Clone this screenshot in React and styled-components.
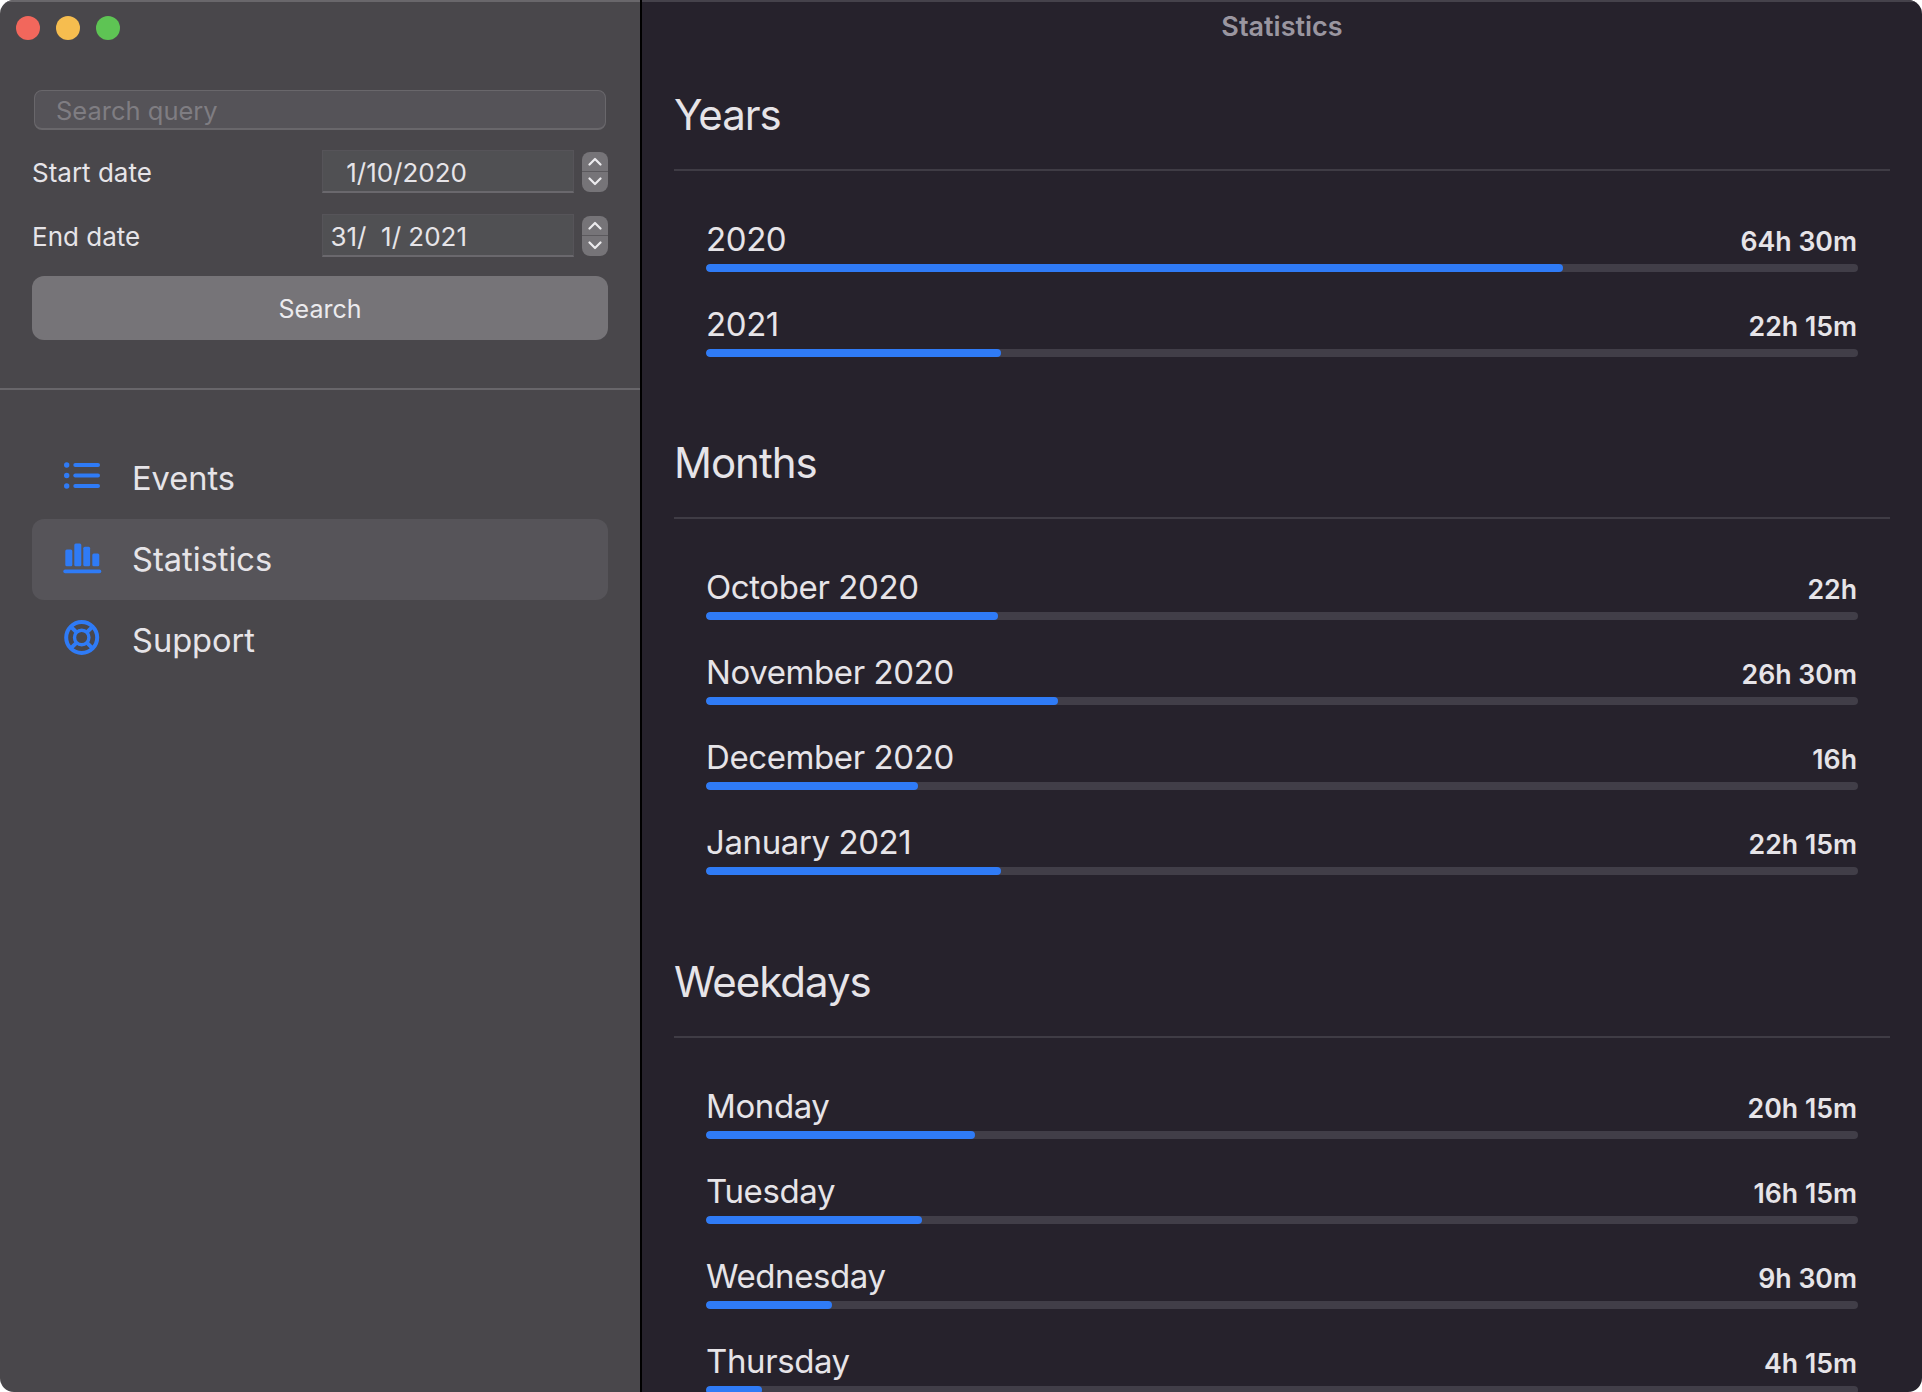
import React from "react";
import styled, { createGlobalStyle } from "styled-components";

const GlobalStyle = createGlobalStyle`
  html, body {
    margin: 0;
    padding: 0;
    background: #fff;
  }
  * {
    box-sizing: border-box;
  }
`;

const Window = styled.div`
  display: flex;
  width: 1922px;
  height: 1392px;
  overflow: hidden;
  border-radius: 14px;
  font-family: Inter, "Liberation Sans", sans-serif;
  color: #e6e4e8;
`;

const Sidebar = styled.aside`
  flex: 0 0 640px;
  display: flex;
  flex-direction: column;
  background: #49474b;
  border-top: 2px solid #69676b;
`;

const Lights = styled.div`
  display: flex;
  gap: 16px;
  padding: 14px 16px 0;
`;

const Light = styled.span`
  width: 24px;
  height: 24px;
  border-radius: 50%;
  background: ${(p) => p.$color};
`;

const Form = styled.div`
  display: flex;
  flex-direction: column;
  padding: 50px 32px 48px;
  border-bottom: 2px solid #68666a;
`;

const SearchInput = styled.input`
  width: 572px;
  height: 40px;
  margin-left: 2px;
  padding: 2px 20px 0 21px;
  border: 1px solid #69676b;
  border-bottom-width: 2px;
  border-radius: 8px;
  background: #555358;
  color: #e6e4e8;
  font: 400 25.5px Inter, "Liberation Sans", sans-serif;
  outline: none;
  &::placeholder {
    color: #7f7d82;
    opacity: 1;
  }
`;

const DateRow = styled.div`
  display: flex;
  align-items: center;
  height: 43px;
  margin-top: ${(p) => p.$top}px;
`;

const DateLabel = styled.label`
  flex: 0 0 290px;
  padding-top: 2px;
  font-size: 26px;
`;

const DateField = styled.div`
  width: 252px;
  height: 43px;
  padding-right: 106px;
  border: 1px solid #565459;
  border-bottom: 2px solid #6a686d;
  background: #505053;
  font-size: 26px;
  line-height: 44px;
  text-align: right;
  white-space: pre;
`;

const Stepper = styled.div`
  width: 26px;
  height: 40px;
  margin-left: 8px;
  display: flex;
  flex-direction: column;
  border-radius: 8px;
  background: #767478;
  overflow: hidden;
`;

const StepHalf = styled.div`
  flex: 1;
  display: flex;
  align-items: center;
  justify-content: center;
  & + & {
    border-top: 1px solid #5b595d;
  }
`;

const SearchButton = styled.button`
  height: 64px;
  margin-top: 19px;
  padding-top: 2px;
  border: 0;
  border-radius: 12px;
  background: #767478;
  color: #ecebee;
  font: 400 25px Inter, "Liberation Sans", sans-serif;
`;

const Nav = styled.nav`
  display: flex;
  flex-direction: column;
  padding: 48px 32px 0;
`;

const NavItem = styled.div`
  display: flex;
  align-items: center;
  height: 81px;
  padding: 0 0 2px 32px;
  gap: 32px;
  border-radius: 12px;
  background: ${(p) => (p.$active ? "#565459" : "transparent")};
  font-size: 32.6px;
`;

const NavIcon = styled.svg`
  flex: 0 0 36px;
  width: 36px;
  height: 36px;
  overflow: visible;
  fill: #2f7bf6;
  stroke: #2f7bf6;
`;

const SupportGlyph = styled(NavIcon)`
  fill: none;
`;

const Gutter = styled.div`
  flex: 0 0 2px;
  background: #000;
`;

const Main = styled.main`
  flex: 1;
  min-width: 0;
  background: #26222c;
  border-top: 2px solid #45424b;
`;

const TitleBar = styled.header`
  height: 52px;
  font-size: 27px;
  font-weight: 600;
  line-height: 50px;
  text-align: center;
  color: #9a96a0;
`;

const Section = styled.section`
  margin: 37px 32px 82px;
  & + & {
    margin-bottom: 83px;
  }
`;

const SectionTitle = styled.h2`
  margin: 0;
  height: 80px;
  padding-bottom: 31px;
  font-size: 42px;
  font-weight: 400;
  letter-spacing: -1px;
  line-height: 48px;
  border-bottom: 2px solid #3f3c45;
`;

const Rows = styled.div`
  margin-top: 16px;
  padding: 0 32px;
`;

const Row = styled.div`
  height: 85px;
  display: flex;
  flex-direction: column;
  justify-content: flex-end;
`;

const RowText = styled.div`
  display: flex;
  align-items: baseline;
  justify-content: space-between;
  padding-right: 1px;
  margin-bottom: 5px;
`;

const RowLabel = styled.span`
  font-size: 33px;
  letter-spacing: -0.4px;
  line-height: 40px;
`;

const RowValue = styled.span`
  font-size: 26.7px;
  font-weight: 600;
`;

const Track = styled.div`
  height: 8px;
  border-radius: 4px;
  background: #413e48;
  overflow: hidden;
`;

const Fill = styled.div`
  height: 100%;
  border-radius: 4px;
  background: #2f7bf6;
`;

const TOTAL_MINUTES = 5205;

const SECTIONS = [
  {
    title: "Years",
    rows: [
      ["2020", 3870],
      ["2021", 1335],
    ],
  },
  {
    title: "Months",
    rows: [
      ["October 2020", 1320],
      ["November 2020", 1590],
      ["December 2020", 960],
      ["January 2021", 1335],
    ],
  },
  {
    title: "Weekdays",
    rows: [
      ["Monday", 1215],
      ["Tuesday", 975],
      ["Wednesday", 570],
      ["Thursday", 255],
    ],
  },
];

function formatMinutes(total) {
  const h = Math.floor(total / 60);
  const m = total % 60;
  return m ? `${h}h ${m}m` : `${h}h`;
}

function Chevron({ up }) {
  return (
    <svg width="14" height="9" viewBox="0 0 14 9" fill="none" stroke="#ecebee" strokeWidth="2.2" strokeLinecap="round" strokeLinejoin="round">
      <path d={up ? "M1.5 7.5L7 2L12.5 7.5" : "M1.5 1.5L7 7L12.5 1.5"} />
    </svg>
  );
}

function DateInput({ label, value, top }) {
  return (
    <DateRow $top={top}>
      <DateLabel>{label}</DateLabel>
      <DateField>{value}</DateField>
      <Stepper>
        <StepHalf>
          <Chevron up />
        </StepHalf>
        <StepHalf>
          <Chevron />
        </StepHalf>
      </Stepper>
    </DateRow>
  );
}

function EventsIcon() {
  return (
    <NavIcon viewBox="0 0 36 36" strokeWidth="0">
      <circle cx="2.7" cy="5" r="2.7" />
      <circle cx="2.7" cy="15.5" r="2.7" />
      <circle cx="2.7" cy="26" r="2.7" />
      <rect x="9.3" y="3" width="26.7" height="4" rx="2" />
      <rect x="9.3" y="13.5" width="26.7" height="4" rx="2" />
      <rect x="9.3" y="24" width="26.7" height="4" rx="2" />
    </NavIcon>
  );
}

function StatisticsIcon() {
  return (
    <NavIcon viewBox="0 0 36 36" strokeWidth="0">
      <rect x="1.3" y="8.5" width="7" height="16.7" rx="1.5" />
      <rect x="10.3" y="2.5" width="7" height="22.7" rx="1.5" />
      <rect x="19.3" y="5.8" width="6.8" height="19.4" rx="1.5" />
      <rect x="28.3" y="12.5" width="7" height="12.7" rx="1.5" />
      <rect x="-0.7" y="28.5" width="38" height="3.7" rx="1.8" />
    </NavIcon>
  );
}

function SupportIcon() {
  return (
    <SupportGlyph viewBox="0 0 36 36">
      <circle cx="17.7" cy="15.5" r="15.5" strokeWidth="4" />
      <circle cx="17.7" cy="15.5" r="7.2" strokeWidth="3.4" />
      <path d="M6.8 4.6L12.6 10.4M28.6 4.6L22.8 10.4M6.8 26.4L12.6 20.6M28.6 26.4L22.8 20.6" strokeWidth="4" />
    </SupportGlyph>
  );
}

export default function App() {
  return (
    <>
      <GlobalStyle />
      <Window>
        <Sidebar>
          <Lights>
            <Light $color="#f2675c" />
            <Light $color="#f6bd4f" />
            <Light $color="#5ec454" />
          </Lights>
          <Form>
            <SearchInput placeholder="Search query" />
            <DateInput label="Start date" value="1/10/2020" top={20} />
            <DateInput label="End date" value="31/  1/ 2021" top={21} />
            <SearchButton>Search</SearchButton>
          </Form>
          <Nav>
            <NavItem>
              <EventsIcon />
              Events
            </NavItem>
            <NavItem $active>
              <StatisticsIcon />
              Statistics
            </NavItem>
            <NavItem>
              <SupportIcon />
              Support
            </NavItem>
          </Nav>
        </Sidebar>
        <Gutter />
        <Main>
          <TitleBar>Statistics</TitleBar>
          {SECTIONS.map((section) => (
            <Section key={section.title}>
              <SectionTitle>{section.title}</SectionTitle>
              <Rows>
                {section.rows.map(([label, minutes]) => (
                  <Row key={label}>
                    <RowText>
                      <RowLabel>{label}</RowLabel>
                      <RowValue>{formatMinutes(minutes)}</RowValue>
                    </RowText>
                    <Track>
                      <Fill style={{ width: `${(minutes / TOTAL_MINUTES) * 100}%` }} />
                    </Track>
                  </Row>
                ))}
              </Rows>
            </Section>
          ))}
        </Main>
      </Window>
    </>
  );
}
